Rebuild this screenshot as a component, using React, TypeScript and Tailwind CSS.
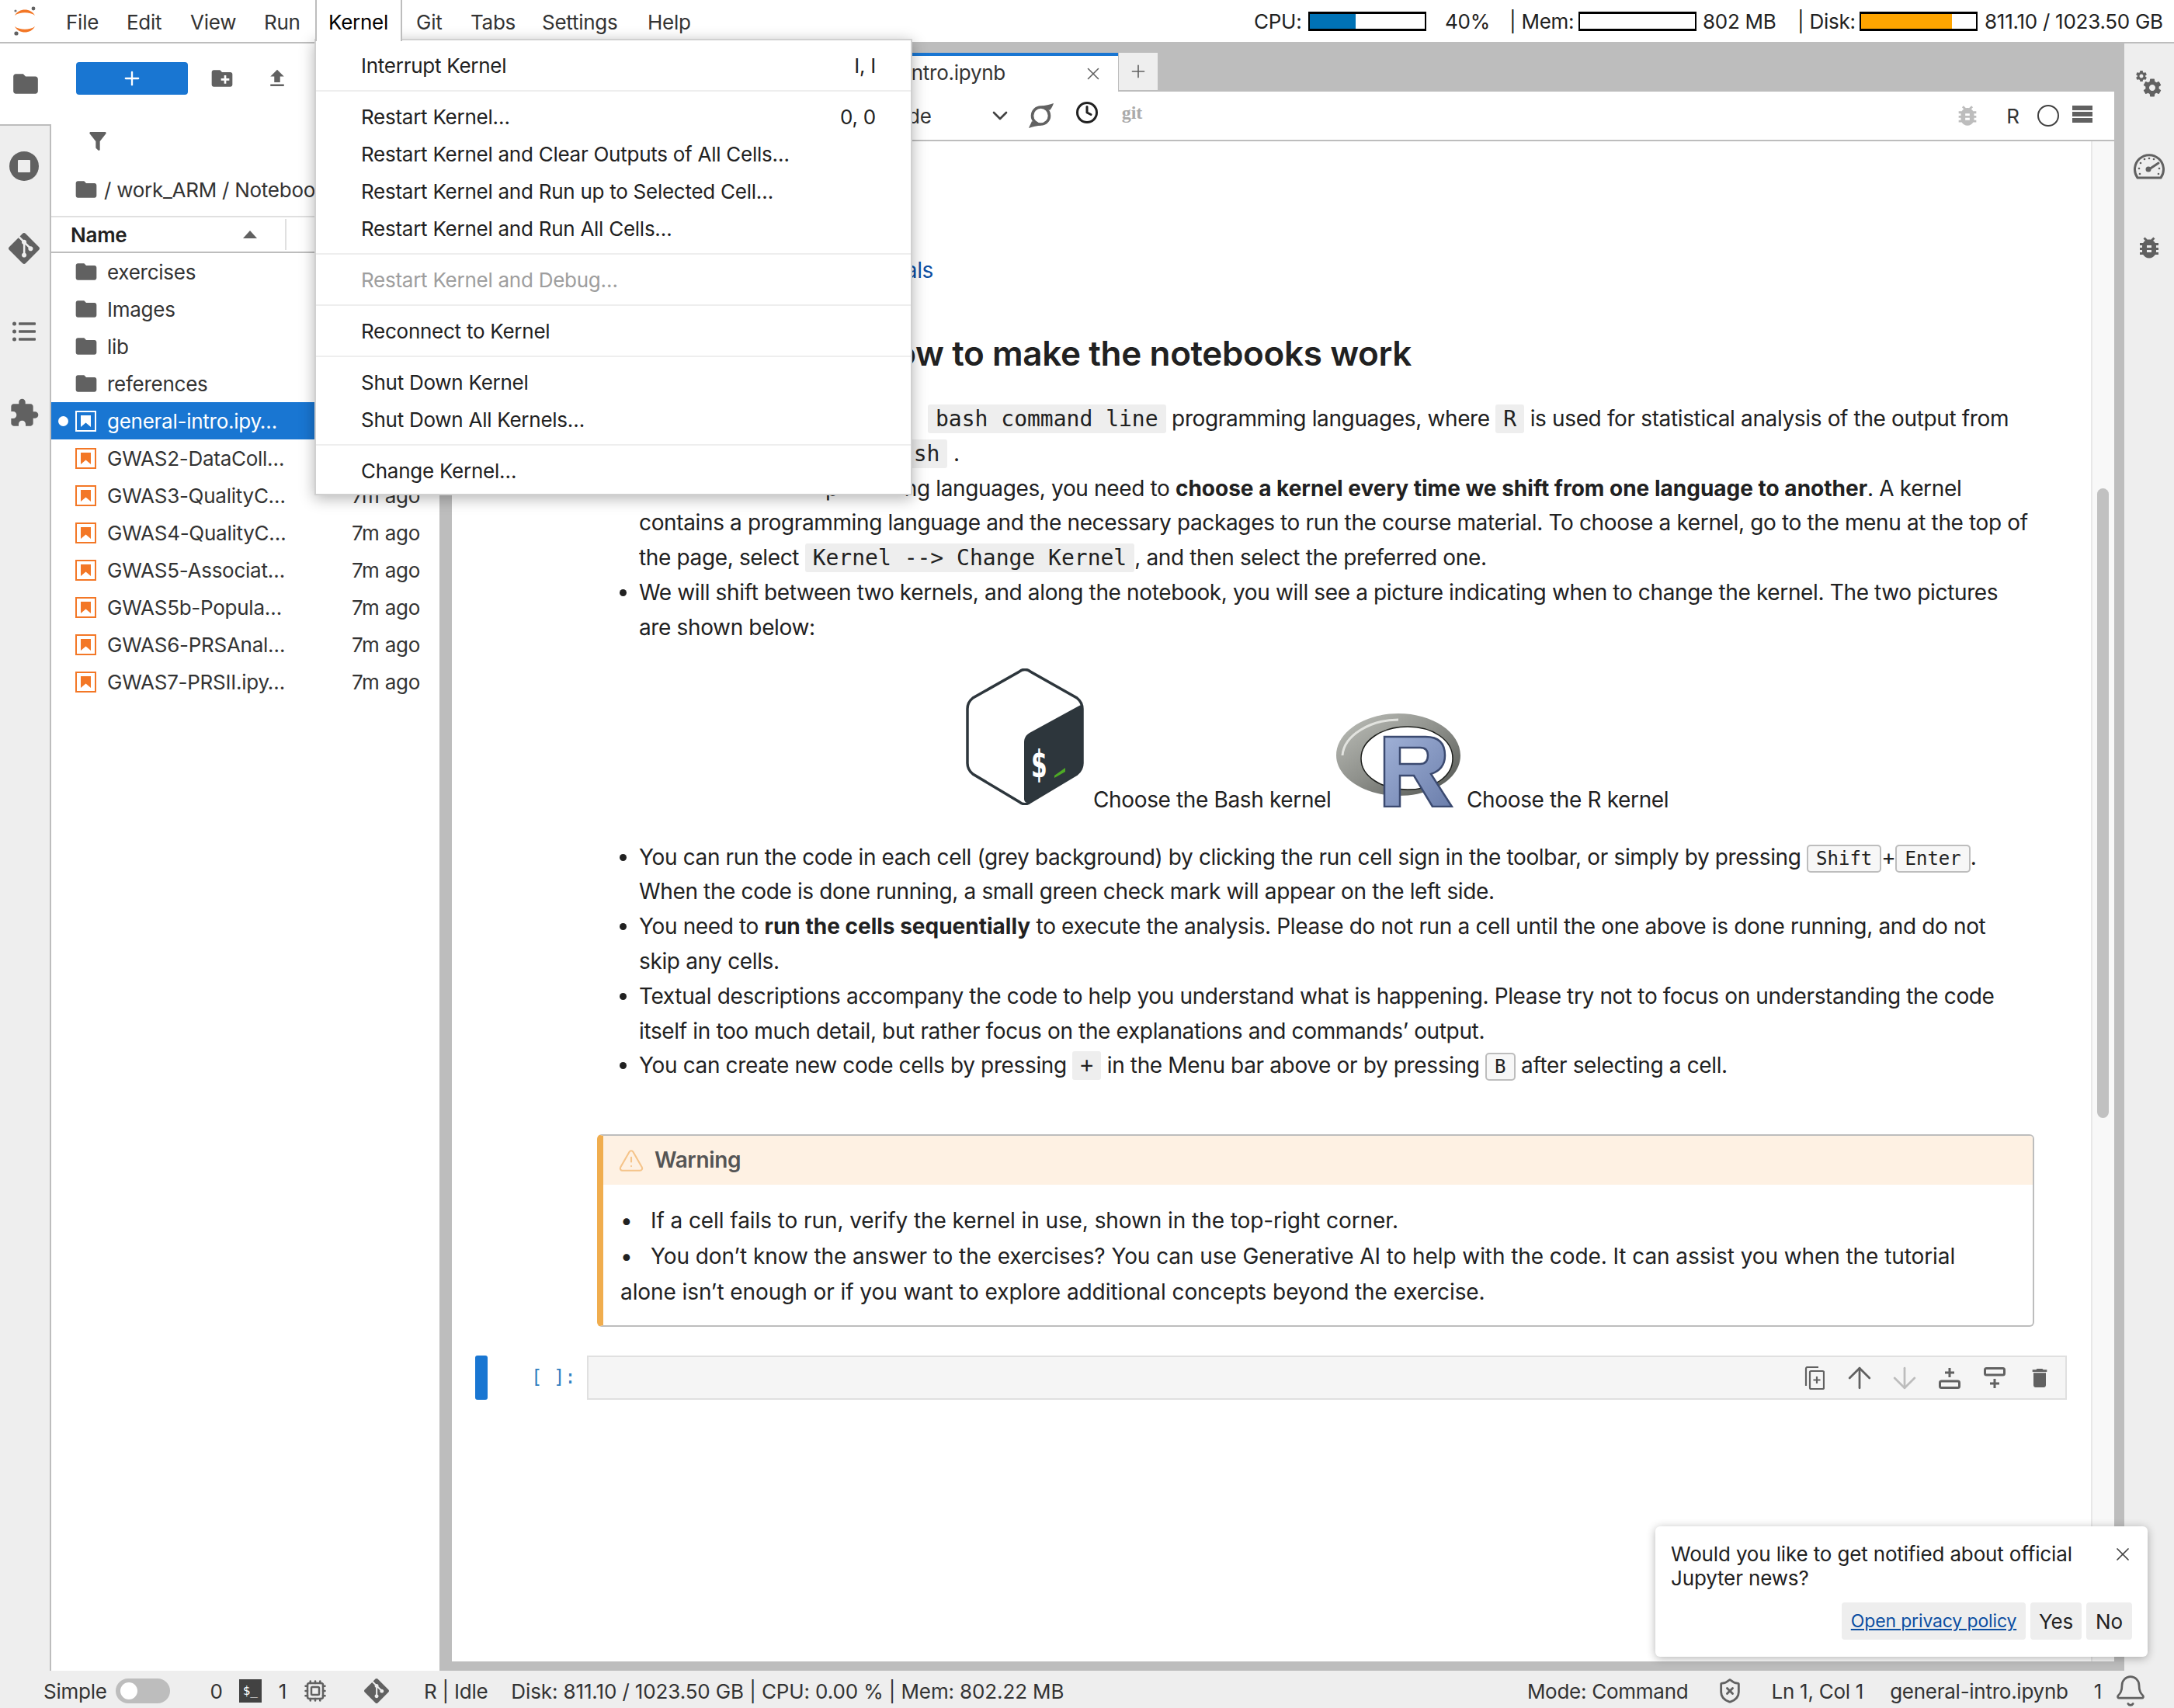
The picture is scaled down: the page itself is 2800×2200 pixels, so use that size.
import { Bell, Cpu, ShieldX, TriangleAlert, X, Plus, ArrowUp, ArrowDown, ChevronDown, Clock } from "lucide-react";
import { SiGit } from "react-icons/si";
import type { ReactNode } from "react";

const folderPath = "M10 4H4c-1.1 0-2 .9-2 2v12c0 1.1.9 2 2 2h16c1.1 0 2-.9 2-2V8c0-1.1-.9-2-2-2h-8l-2-2z";
const gearPath =
  "M19.43 12.98c.04-.32.07-.64.07-.98s-.03-.66-.07-.98l2.11-1.65c.19-.15.24-.42.12-.64l-2-3.46c-.12-.22-.39-.3-.61-.22l-2.49 1c-.52-.4-1.08-.73-1.69-.98l-.38-2.65C14.46 2.18 14.25 2 14 2h-4c-.25 0-.46.18-.49.42l-.38 2.65c-.61.25-1.17.59-1.69.98l-2.49-1c-.23-.09-.49 0-.61.22l-2 3.46c-.13.22-.07.49.12.64l2.11 1.65c-.04.32-.07.65-.07.98s.03.66.07.98l-2.11 1.65c-.19.15-.24.42-.12.64l2 3.46c.12.22.39.3.61.22l2.49-1c.52.4 1.08.73 1.69.98l.38 2.65c.03.24.24.42.49.42h4c.25 0 .46-.18.49-.42l.38-2.65c.61-.25 1.17-.59 1.69-.98l2.49 1c.23.09.49 0 .61-.22l2-3.46c.12-.22.07-.49-.12-.64l-2.11-1.65zM12 15.5c-1.93 0-3.5-1.57-3.5-3.5s1.57-3.5 3.5-3.5 3.5 1.57 3.5 3.5-1.57 3.5-3.5 3.5z";
const bugPath =
  "M20 8h-2.81c-.45-.78-1.07-1.45-1.82-1.96L17 4.41 15.59 3l-2.17 2.17C12.96 5.06 12.49 5 12 5c-.49 0-.96.06-1.41.17L8.41 3 7 4.41l1.62 1.63C7.88 6.55 7.26 7.22 6.81 8H4v2h2.09c-.05.33-.09.66-.09 1v1H4v2h2v1c0 .34.04.67.09 1H4v2h2.81c1.04 1.79 2.97 3 5.19 3s4.15-1.21 5.19-3H20v-2h-2.09c.05-.33.09-.66.09-1v-1h2v-2h-2v-1c0-.34-.04-.67-.09-1H20V8zm-6 8h-4v-2h4v2zm0-4h-4v-2h4v2z";

function Mat({ d, className }: { d: string; className?: string }) {
  return (
    <svg viewBox="0 0 24 24" className={className} fill="currentColor">
      <path d={d} />
    </svg>
  );
}

function FolderIcon({ className = "w-[32px] h-[32px] text-[#616161]" }: { className?: string }) {
  return <Mat d={folderPath} className={className} />;
}

function JupyterLogo() {
  return (
    <svg viewBox="0 0 32 40" className="w-[32px] h-[40px]">
      <path d="M3 13 C8 3 24 3 29 13 C23 8 9 8 3 13Z" fill="#f37726" />
      <path d="M3 27 C8 37 24 37 29 27 C23 32 9 32 3 27Z" fill="#f37726" />
      <circle cx="27" cy="4" r="2.4" fill="#616161" />
      <circle cx="4" cy="7" r="1.6" fill="#757575" />
      <circle cx="5" cy="36" r="2.6" fill="#616161" />
    </svg>
  );
}

function NotebookIcon({ active }: { active?: boolean }) {
  const color = active ? "#ffffff" : "#f37726";
  return (
    <svg viewBox="0 0 27 27" className="w-[27px] h-[27px] shrink-0">
      <rect x="1" y="1" width="25" height="25" fill="none" stroke={color} strokeWidth="2" />
      <path d="M7 6H20V21L13.5 15.5 7 21Z" fill={color} />
    </svg>
  );
}

function TocIcon() {
  return (
    <svg viewBox="0 0 30 26" className="w-[30px] h-[26px] text-[#616161]" fill="currentColor">
      <circle cx="2.5" cy="3" r="2.5" />
      <circle cx="2.5" cy="13" r="2.5" />
      <circle cx="2.5" cy="23" r="2.5" />
      <rect x="8" y="1.2" width="22" height="3.6" rx="1" />
      <rect x="8" y="11.2" width="22" height="3.6" rx="1" />
      <rect x="8" y="21.2" width="22" height="3.6" rx="1" />
    </svg>
  );
}

function StopIcon() {
  return (
    <svg viewBox="0 0 38 38" className="w-[38px] h-[38px]">
      <circle cx="19" cy="19" r="19" fill="#616161" />
      <rect x="11" y="11" width="16" height="16" rx="1" fill="#eeeeee" />
    </svg>
  );
}

function GearsIcon() {
  return (
    <svg viewBox="0 0 34 36" className="h-[36px] w-[34px] text-[#616161]" fill="currentColor">
      <g transform="translate(7.2 8.2) scale(1.15)">
        <path d={gearPath} />
      </g>
      <g transform="translate(-1.4 -1.4) scale(0.7)">
        <path d={gearPath} />
      </g>
    </svg>
  );
}

function GaugeIcon() {
  return (
    <svg viewBox="0 0 40 34" className="h-[34px] w-[40px]" fill="none" stroke="#616161">
      <path d="M5 32 A18.5 18.5 0 1 1 35 32 Z" strokeWidth="3" strokeLinejoin="round" />
      <path d="M20 21 L32 13" strokeWidth="3" strokeLinecap="round" />
      <circle cx="19" cy="21" r="3.5" fill="#616161" stroke="none" />
      <g fill="#616161" stroke="none">
        <circle cx="7" cy="20" r="1.3" />
        <circle cx="9" cy="13" r="1.3" />
        <circle cx="14" cy="8" r="1.3" />
        <circle cx="20" cy="7" r="1.3" />
        <circle cx="26" cy="8" r="1.3" />
        <circle cx="33" cy="20" r="1.3" />
        <circle cx="8" cy="27" r="1.3" />
        <circle cx="32" cy="27" r="1.3" />
      </g>
    </svg>
  );
}

function RefreshIcon() {
  return (
    <svg viewBox="0 0 32 32" className="h-[32px] w-[32px]" fill="#616161">
      <circle cx="15.5" cy="16" r="11" fill="none" stroke="#616161" strokeWidth="3.6" />
      <path d="M32 0 C27 2 21 3 16 3.5 L27 9 C29 7 31 3 32 0Z" />
      <path d="M0 32 C5 30 11 29 16 28.5 L4 23 C3 26 1 29 0 32Z" />
    </svg>
  );
}

function CopyPlusIcon() {
  return (
    <svg viewBox="0 0 26 30" className="h-[30px] w-[26px]" fill="none" stroke="#616161" strokeWidth="2.2">
      <path d="M2 25V3a2 2 0 0 1 2-2h14" />
      <rect x="7" y="6" width="18" height="23" rx="1.5" />
      <path d="M16 13v9M11.5 17.5h9" />
    </svg>
  );
}

function AddAboveIcon() {
  return (
    <svg viewBox="0 0 28 28" className="h-[28px] w-[28px]" fill="none" stroke="#616161" strokeWidth="3">
      <path d="M14 1v12M8 7h12" />
      <rect x="1.5" y="18" width="25" height="8.5" rx="2" />
    </svg>
  );
}

function AddBelowIcon() {
  return (
    <svg viewBox="0 0 28 28" className="h-[28px] w-[28px]" fill="none" stroke="#616161" strokeWidth="3">
      <path d="M14 15v12M8 21h12" />
      <rect x="1.5" y="1.5" width="25" height="8.5" rx="2" />
    </svg>
  );
}

function BashLogo() {
  return (
    <svg viewBox="0 0 152 176" className="h-[176px] w-[152px] shrink-0">
      <path
        d="M69 4 C73 0.5 79 0.5 83 4 L143 38 C148 42 150 46 150 52 V122 C150 128 148 132 143 136 L83 172 C79 175.5 73 175.5 69 172 L9 136 C4 132 2 128 2 122 V52 C2 46 4 42 9 38 Z"
        fill="#ffffff"
        stroke="#2d363c"
        strokeWidth="3.5"
      />
      <path
        d="M146 48 C149 46 151 48 151 52 V122 C151 128 149 132 143 136 L83 172 C79 175 75 172 75 168 V96 C75 90 77 86 82 83 Z"
        fill="#2d363c"
      />
      <text transform="translate(84 140) scale(0.62 1)" fill="#ffffff" fontSize="48" fontWeight="700" fontFamily="DejaVu Sans, sans-serif">
        $
      </text>
      <path d="M114 138 L128 128 V133 L114 141Z" fill="#4eaa25" />
    </svg>
  );
}

function RLogo() {
  return (
    <svg viewBox="0 0 160 121" className="h-[121px] w-[160px] shrink-0">
      <defs>
        <linearGradient id="ring" x1="0" y1="0" x2="1" y2="1">
          <stop offset="0" stopColor="#bfc1bb" />
          <stop offset="0.5" stopColor="#8d8f8a" />
          <stop offset="1" stopColor="#4f524e" />
        </linearGradient>
        <linearGradient id="letter" x1="0" y1="0" x2="1" y2="1">
          <stop offset="0" stopColor="#9fb0d6" />
          <stop offset="1" stopColor="#6b7eab" />
        </linearGradient>
      </defs>
      <path
        fillRule="evenodd"
        d="M80 0 C124 0 160 24 160 54 C160 84 124 106 80 106 C36 106 0 82 0 54 C0 24 36 0 80 0Z M92 17 C60 17 32 34 32 58 C32 82 60 98 92 98 C124 98 150 82 150 58 C150 34 124 17 92 17Z"
        fill="url(#ring)"
      />
      <path d="M8 54 C10 28 44 8 80 8" fill="none" stroke="#e2e3df" strokeWidth="3" />
      <path
        d="M92 17 C60 17 32 34 32 58 C32 82 60 98 92 98 C124 98 150 82 150 58 C150 34 124 17 92 17Z"
        fill="none"
        stroke="#1d1f1c"
        strokeWidth="1.5"
      />
      <path
        fillRule="evenodd"
        d="M62 30 H115 Q140 30 140 54 Q140 72 122 78 L149 120 H124 L100 80 H82 V120 H62Z M82 44 V65 H108 Q118 65 118 54 Q118 44 108 44Z"
        fill="url(#letter)"
        stroke="#3b4a70"
        strokeWidth="2.5"
      />
    </svg>
  );
}

function Code({ children }: { children: ReactNode }) {
  return (
    <code className="rounded-[3px] bg-[#eeeeee] px-[10px] py-[2px] font-[family-name:'DejaVu_Sans_Mono',monospace] text-[28px] leading-none tracking-normal text-[#212121]">
      {children}
    </code>
  );
}

function Kbd({ children }: { children: ReactNode }) {
  return (
    <kbd className="rounded-[5px] border-2 border-[#bdbdbd] bg-[#f7f7f7] px-[10px] py-[2px] font-[family-name:'DejaVu_Sans_Mono',monospace] text-[24px] leading-none tracking-normal text-[#212121]">
      {children}
    </kbd>
  );
}

function Bar({ pct, color }: { pct: number; color: string }) {
  return (
    <div className="h-[25px] w-[152px] shrink-0 border-x-2 border-y-[3px] border-black bg-white">
      <div className="h-full" style={{ width: `${pct}%`, background: color }} />
    </div>
  );
}

function MenuItem({ label, hint, disabled }: { label: string; hint?: string; disabled?: boolean }) {
  return (
    <div className={`flex h-[48px] items-center justify-between pl-[58px] pr-[45px] ${disabled ? "text-[#9e9e9e]" : "text-[#212121]"}`}>
      <span>{label}</span>
      {hint && <span>{hint}</span>}
    </div>
  );
}

function MenuSep() {
  return (
    <div className="flex h-[18px] items-center">
      <div className="h-[2px] w-full bg-[#eeeeee]" />
    </div>
  );
}

function KernelMenu() {
  return (
    <>
      <div className="absolute left-[406px] top-0 z-30 flex h-[53px] w-[112px] items-center border-x-2 border-[#bdbdbd] bg-white pl-[15px] pt-[3px] text-[26px] text-black">
        Kernel
      </div>
      <div className="absolute left-[405px] top-[50px] z-20 h-[588px] w-[770px] border-2 border-[#d0d0d0] bg-white pt-[8px] text-[26px] shadow-[0_4px_18px_rgba(0,0,0,0.3)]">
        <MenuItem label="Interrupt Kernel" hint="I, I" />
        <MenuSep />
        <MenuItem label="Restart Kernel…" hint="0, 0" />
        <MenuItem label="Restart Kernel and Clear Outputs of All Cells…" />
        <MenuItem label="Restart Kernel and Run up to Selected Cell…" />
        <MenuItem label="Restart Kernel and Run All Cells…" />
        <MenuSep />
        <MenuItem label="Restart Kernel and Debug…" disabled />
        <MenuSep />
        <MenuItem label="Reconnect to Kernel" />
        <MenuSep />
        <MenuItem label="Shut Down Kernel" />
        <MenuItem label="Shut Down All Kernels…" />
        <MenuSep />
        <MenuItem label="Change Kernel…" />
      </div>
    </>
  );
}

function TopBar() {
  return (
    <div className="flex h-[54px] shrink-0 items-center justify-between bg-white text-[26px] text-[#333333]">
      <div className="flex items-center">
        <div className="ml-[16px] mr-[37px] shrink-0">
          <JupyterLogo />
        </div>
        <div className="flex items-center pt-[3px]">
          <span className="w-[78px]">File</span>
          <span className="w-[82px]">Edit</span>
          <span className="w-[95px]">View</span>
          <span className="w-[196px]">Run</span>
          <span className="w-[70px]">Git</span>
          <span className="w-[92px]">Tabs</span>
          <span className="w-[136px]">Settings</span>
          <span>Help</span>
        </div>
      </div>
      <div className="flex w-[1185px] shrink-0 items-center text-[#212121]">
        <span className="w-[70px]">CPU:</span>
        <Bar pct={40} color="#0072b5" />
        <span className="ml-[24px] w-[83px]">40%</span>
        <span className="w-[89px]">| Mem:</span>
        <Bar pct={0} color="#0072b5" />
        <span className="ml-[8px] w-[122px]">802 MB</span>
        <span className="w-[80px]">| Disk:</span>
        <Bar pct={79} color="#ffa500" />
        <span className="ml-[9px]">811.10 / 1023.50 GB</span>
      </div>
    </div>
  );
}

function LeftRail() {
  return (
    <div className="mt-[2px] flex w-[66px] shrink-0 flex-col items-center">
      <div className="flex h-[104px] w-full items-center justify-center bg-white">
        <FolderIcon className="h-[38px] w-[38px] text-[#616161]" />
      </div>
      <div className="flex w-full flex-1 flex-col items-center border-r-2 border-t-2 border-[#bdbdbd] bg-[#eeeeee] pr-[2px] pt-[33px]">
        <StopIcon />
        <div className="mt-[67px] text-[#616161]">
          <SiGit className="h-[40px] w-[40px]" />
        </div>
        <div className="mt-[74px]">
          <TocIcon />
        </div>
        <Mat
          d="M20.5 11H19V7c0-1.1-.9-2-2-2h-4V3.5C13 2.12 11.88 1 10.5 1S8 2.12 8 3.5V5H4c-1.1 0-1.99.9-1.99 2v3.8H3.5c1.49 0 2.7 1.21 2.7 2.7s-1.21 2.7-2.7 2.7H2V20c0 1.1.9 2 2 2h3.8v-1.5c0-1.49 1.21-2.7 2.7-2.7 1.49 0 2.7 1.21 2.7 2.7V22H17c1.1 0 2-.9 2-2v-4h1.5c1.38 0 2.5-1.12 2.5-2.5S21.88 11 20.5 11z"
          className="mt-[72px] h-[40px] w-[40px] text-[#616161]"
        />
      </div>
    </div>
  );
}

const folders = ["exercises", "Images", "lib", "references"];
const notebooks = [
  "GWAS2-DataColl…",
  "GWAS3-QualityC…",
  "GWAS4-QualityC…",
  "GWAS5-Associat…",
  "GWAS5b-Popula…",
  "GWAS6-PRSAnal…",
  "GWAS7-PRSII.ipy…",
];

function FileBrowser() {
  return (
    <div className="mt-[2px] flex w-[500px] shrink-0 flex-col overflow-hidden bg-white text-[26px] text-[#333333]">
      <div className="flex h-[24px] shrink-0" />
      <div className="flex h-[42px] shrink-0 items-center">
        <div className="ml-[32px] flex h-[42px] w-[144px] items-center justify-center rounded-[4px] bg-[#1976d2]">
          <Plus className="h-[28px] w-[28px] text-white" strokeWidth={2} />
        </div>
        <Mat
          d="M20 6h-8l-2-2H4c-1.11 0-1.99.89-1.99 2L2 18c0 1.11.89 2 2 2h16c1.11 0 2-.89 2-2V8c0-1.11-.89-2-2-2zm-1 8h-3v3h-2v-3h-3v-2h3V9h2v3h3v2z"
          className="ml-[28px] h-[32px] w-[32px] text-[#616161]"
        />
        <Mat d="M9 16h6v-6h4l-7-7-7 7h4zm-4 2h14v2H5z" className="ml-[40px] h-[30px] w-[30px] text-[#616161]" />
      </div>
      <div className="mt-[44px] flex h-[32px] shrink-0 items-center pl-[44px]">
        <Mat
          d="M14,12V19.88C14.04,20.18 13.94,20.5 13.71,20.71C13.32,21.1 12.69,21.1 12.3,20.71L10.29,18.7C10.06,18.47 9.96,18.16 10,17.87V12H9.97L4.21,4.62C3.87,4.19 3.95,3.56 4.38,3.22C4.57,3.08 4.78,3 5,3V3H19V3C19.22,3 19.43,3.08 19.62,3.22C20.05,3.56 20.13,4.19 19.79,4.62L14.03,12H14Z"
          className="h-[32px] w-[32px] text-[#616161]"
        />
      </div>
      <div className="mt-[26px] flex h-[40px] shrink-0 items-center gap-[7px] whitespace-nowrap pl-[29px]">
        <FolderIcon className="h-[32px] w-[32px] text-[#616161]" />
        <span>/ work_ARM / Notebooks</span>
      </div>
      <div className="mt-[14px] flex h-[48px] shrink-0 items-center border-y-2 border-b-[#bdbdbd] border-t-[#e0e0e0]">
        <span className="ml-[25px] w-[222px] font-semibold text-[#212121]">Name</span>
        <svg viewBox="0 0 18 10" className="h-[10px] w-[18px]">
          <path d="M9 0L18 10H0Z" fill="#616161" />
        </svg>
        <div className="ml-[36px] h-[40px] w-[2px] bg-[#e0e0e0]" />
      </div>
      {folders.map((name) => (
        <div key={name} className="flex h-[48px] shrink-0 items-center pl-[29px]">
          <FolderIcon className="h-[32px] w-[32px] text-[#616161]" />
          <span className="ml-[11px]">{name}</span>
        </div>
      ))}
      <div className="flex h-[48px] shrink-0 items-center bg-[#1976d2] text-white">
        <div className="ml-[9px] h-[13px] w-[13px] rounded-full bg-white" />
        <div className="ml-[9px]">
          <NotebookIcon active />
        </div>
        <span className="ml-[14px]">general-intro.ipy…</span>
      </div>
      {notebooks.map((name) => (
        <div key={name} className="flex h-[48px] shrink-0 items-center pl-[31px] pr-[25px]">
          <NotebookIcon />
          <span className="ml-[14px] flex-1">{name}</span>
          <span>7m ago</span>
        </div>
      ))}
    </div>
  );
}

function Notebook() {
  return (
    <div className="flex min-w-0 flex-1 bg-white">
      <div className="min-w-0 flex-1 text-[28px] leading-[44.8px] tracking-[-0.36px] text-[#212121]">
        <div className="mt-[144px] h-[45px] w-[620px] whitespace-nowrap text-right text-[#0b4ea2]">Back to the course materials</div>
        <h2 className="mt-[52px] h-[64px] w-[1236px] whitespace-nowrap text-right text-[44px] font-semibold leading-[64px]">
          How to make the notebooks work
        </h2>
        <ul className="ml-[241px] mt-[30px] list-disc whitespace-nowrap">
          <li>
            <span className="inline-block w-[372px]">This course will use R and</span>
            <Code>bash command line</Code> programming languages, where <Code>R</Code> is used for statistical analysis of the output from
            <br />
            <span className="inline-block w-[310px]">the software run using</span>
            <Code>bash</Code> .
          </li>
          <li>
            <span className="inline-block w-[240px] text-transparent">To use the two</span>p
            <span className="inline-block w-[85px] text-transparent">rogrammi</span>ng languages, you need to{" "}
            <b className="font-bold tracking-normal">choose a kernel every time we shift from one language to another</b>. A kernel
            <br />
            contains a programming language and the necessary packages to run the course material. To choose a kernel, go to the menu at the top of
            <br />
            the page, select <Code>Kernel --&gt; Change Kernel</Code>, and then select the preferred one.
          </li>
          <li>
            We will shift between two kernels, and along the notebook, you will see a picture indicating when to change the kernel. The two pictures
            <br />
            are shown below:
          </li>
        </ul>
        <div className="ml-[662px] mt-[30px] flex h-[221px] items-start whitespace-nowrap">
          <BashLogo />
          <span className="ml-[12px] mt-[147px] w-[313px]">Choose the Bash kernel</span>
          <div className="mt-[58px]">
            <RLogo />
          </div>
          <span className="ml-[8px] mt-[147px]">Choose the R kernel</span>
        </div>
        <ul className="ml-[241px] list-disc whitespace-nowrap">
          <li>
            You can run the code in each cell (grey background) by clicking the run cell sign in the toolbar, or simply by pressing <Kbd>Shift</Kbd>+<Kbd>Enter</Kbd>.
            <br />
            When the code is done running, a small green check mark will appear on the left side.
          </li>
          <li>
            You need to <b className="font-bold tracking-normal">run the cells sequentially</b> to execute the analysis. Please do not run a cell until the one above is done running, and do not
            <br />
            skip any cells.
          </li>
          <li>
            Textual descriptions accompany the code to help you understand what is happening. Please try not to focus on understanding the code
            <br />
            itself in too much detail, but rather focus on the explanations and commands’ output.
          </li>
          <li>
            You can create new code cells by pressing <Code>+</Code> in the Menu bar above or by pressing <Kbd>B</Kbd> after selecting a cell.
          </li>
        </ul>
        <div className="ml-[187px] mt-[66px] h-[248px] w-[1851px] overflow-hidden rounded-[6px] border-2 border-l-[8px] border-[#bdbdbd] border-l-[#f0ad4e]">
          <div className="flex h-[63px] items-center bg-[#fef1e3] pl-[19px] font-semibold text-[#555555]">
            <TriangleAlert className="h-[34px] w-[34px] text-[#f5c48a]" strokeWidth={1.5} />
            <span className="ml-[13px]">Warning</span>
          </div>
          <div className="whitespace-nowrap pl-[22px] pt-[23px] leading-[46px] tracking-[-0.08px]">
            <div>
              <span className="inline-block w-[39px]">•</span>If a cell fails to run, verify the kernel in use, shown in the top-right corner.
            </div>
            <div>
              <span className="inline-block w-[39px]">•</span>You don’t know the answer to the exercises? You can use Generative AI to help with the code. It can assist you when the tutorial
            </div>
            <div>alone isn’t enough or if you want to explore additional concepts beyond the exercise.</div>
          </div>
        </div>
        <div className="mt-[37px] flex h-[57px] items-center">
          <div className="ml-[30px] h-[57px] w-[16px] rounded-[3px] bg-[#1976d2]" />
          <span className="ml-[56px] w-[72px] font-[family-name:'DejaVu_Sans_Mono',monospace] text-[24px] tracking-normal text-[#307fc1]">[ ]:</span>
          <div className="flex h-[57px] w-[1906px] items-center justify-end border-2 border-[#e0e0e0] bg-[#f5f5f5] pr-[4px]">
            <div className="flex w-[58px] justify-center">
              <CopyPlusIcon />
            </div>
            <div className="flex w-[58px] justify-center">
              <ArrowUp className="h-[44px] w-[44px] text-[#616161]" strokeWidth={1.5} />
            </div>
            <div className="flex w-[58px] justify-center">
              <ArrowDown className="h-[44px] w-[44px] text-[#bdbdbd]" strokeWidth={1.5} />
            </div>
            <div className="flex w-[58px] justify-center">
              <AddAboveIcon />
            </div>
            <div className="flex w-[58px] justify-center">
              <AddBelowIcon />
            </div>
            <div className="flex w-[58px] justify-center">
              <Mat d="M6 19c0 1.1.9 2 2 2h8c1.1 0 2-.9 2-2V7H6v12zM19 4h-3.5l-1-1h-5l-1 1H5v2h14V4z" className="h-[32px] w-[32px] text-[#616161]" />
            </div>
          </div>
        </div>
      </div>
      <div className="w-[30px] shrink-0 border-l-2 border-[#e8e8e8] bg-[#f8f8f8]">
        <div className="ml-[6px] mt-[447px] h-[811px] w-[15px] rounded-[8px] bg-[#c1c1c1]" />
      </div>
    </div>
  );
}

function MainArea() {
  return (
    <div className="ml-[16px] flex min-w-0 flex-1 flex-col pb-[12px]">
      <div className="flex h-[64px] shrink-0 items-end">
        <div className="flex h-[50px] w-[858px] items-center justify-end border-t-[4px] border-[#1976d2] bg-white text-[26px] text-[#333333]">
          <span className="pb-[4px]">general-intro.ipynb</span>
          <X className="ml-[100px] mr-[19px] h-[26px] w-[26px] text-[#616161]" strokeWidth={1.5} />
        </div>
        <div className="ml-[1px] mt-[14px] flex h-[48px] w-[50px] items-center justify-center self-start bg-[#eeeeee]">
          <Plus className="h-[26px] w-[26px] text-[#616161]" strokeWidth={1.5} />
        </div>
      </div>
      <div className="flex h-[64px] shrink-0 items-center border-b-2 border-[#bdbdbd] bg-white text-[26px] text-[#333333]">
        <span className="ml-[553px]">Code</span>
        <ChevronDown className="ml-[72px] h-[32px] w-[32px] text-[#424242]" strokeWidth={2} />
        <div className="ml-[21px]">
          <RefreshIcon />
        </div>
        <div className="ml-[28px] pb-[8px]">
          <Clock className="h-[30px] w-[30px] text-[#212121]" strokeWidth={2.4} />
        </div>
        <span className="ml-[30px] pb-[8px] font-[family-name:'Liberation_Serif',serif] text-[24px] font-bold tracking-normal text-[#aaaaaa]">git</span>
        <Mat d={bugPath} className="ml-[1046px] h-[34px] w-[34px] text-[#bdbdbd]" />
        <span className="ml-[33px]">R</span>
        <div className="ml-[23px] h-[28px] w-[28px] rounded-full border-2 border-[#424242]" />
        <div className="ml-[17px] flex w-[26px] flex-col gap-[2px] pb-[4px]">
          <div className="h-[6px] bg-[#616161]" />
          <div className="h-[6px] bg-[#616161]" />
          <div className="h-[6px] bg-[#616161]" />
        </div>
      </div>
      <Notebook />
    </div>
  );
}

function RightRail() {
  return (
    <div className="ml-[13px] mt-[2px] flex w-[64px] shrink-0 flex-col items-center bg-[#eeeeee] pt-[35px]">
      <GearsIcon />
      <div className="mt-[70px]">
        <GaugeIcon />
      </div>
      <Mat d={bugPath} className="mt-[70px] h-[36px] w-[36px] text-[#616161]" />
    </div>
  );
}

function StatusBar() {
  return (
    <div className="flex h-[48px] shrink-0 items-center whitespace-nowrap bg-[#eeeeee] pt-[4px] text-[26px] text-[#333333]">
      <span className="ml-[56px]">Simple</span>
      <div className="ml-[11px] flex h-[32px] w-[70px] items-center rounded-full bg-[#bdbdbd] pl-[6px]">
        <div className="h-[22px] w-[22px] rounded-full bg-white" />
      </div>
      <span className="ml-[52px]">0</span>
      <div className="ml-[21px] flex h-[30px] w-[29px] items-center justify-center bg-[#424242] font-[family-name:'DejaVu_Sans_Mono',monospace] text-[16px] text-white">
        $_
      </div>
      <span className="ml-[22px]">1</span>
      <Cpu className="ml-[22px] h-[30px] w-[30px] text-[#616161]" />
      <SiGit className="ml-[48px] h-[32px] w-[32px] text-[#616161]" />
      <span className="ml-[45px]">R | Idle</span>
      <span className="ml-[30px] tracking-[-0.12px]">Disk: 811.10 / 1023.50 GB | CPU: 0.00 % | Mem: 802.22 MB</span>
      <span className="ml-auto">Mode: Command</span>
      <ShieldX className="ml-[37px] h-[34px] w-[34px] text-[#616161]" strokeWidth={2} />
      <span className="ml-[36px]">Ln 1, Col 1</span>
      <span className="ml-[34px]">general-intro.ipynb</span>
      <span className="ml-[33px]">1</span>
      <Bell className="ml-[15px] mr-[34px] h-[44px] w-[44px] text-[#616161]" strokeWidth={1.5} />
    </div>
  );
}

function Notification() {
  return (
    <div className="absolute left-[2132px] top-[1966px] z-20 h-[168px] w-[634px] rounded-[6px] bg-white px-[20px] pt-[20px] text-[26px] leading-[31px] tracking-[-0.15px] text-[#212121] shadow-[0_2px_12px_rgba(0,0,0,0.3)]">
      <div className="flex items-start justify-between">
        <span className="w-[540px]">
          Would you like to get notified about official
          <br />
          Jupyter news?
        </span>
        <X className="mr-[-2px] mt-[2px] h-[28px] w-[28px] text-[#424242]" strokeWidth={1.5} />
      </div>
      <div className="mt-[16px] flex justify-end gap-[6px]">
        <div className="flex h-[48px] w-[237px] items-center justify-center whitespace-nowrap rounded-[4px] bg-[#eeeeee] text-[23px] text-[#0b4ea2] underline">
          Open privacy policy
        </div>
        <div className="flex h-[48px] w-[66px] items-center justify-center rounded-[4px] bg-[#eeeeee]">Yes</div>
        <div className="flex h-[48px] w-[59px] items-center justify-center rounded-[4px] bg-[#eeeeee]">No</div>
      </div>
    </div>
  );
}

export default function App() {
  return (
    <div className="relative flex h-[2200px] w-[2800px] flex-col overflow-hidden bg-[#bdbdbd] font-[family-name:Inter,sans-serif] tracking-[-0.26px]">
      <TopBar />
      <div className="flex min-h-0 flex-1">
        <LeftRail />
        <FileBrowser />
        <MainArea />
        <RightRail />
      </div>
      <StatusBar />
      <KernelMenu />
      <Notification />
    </div>
  );
}
